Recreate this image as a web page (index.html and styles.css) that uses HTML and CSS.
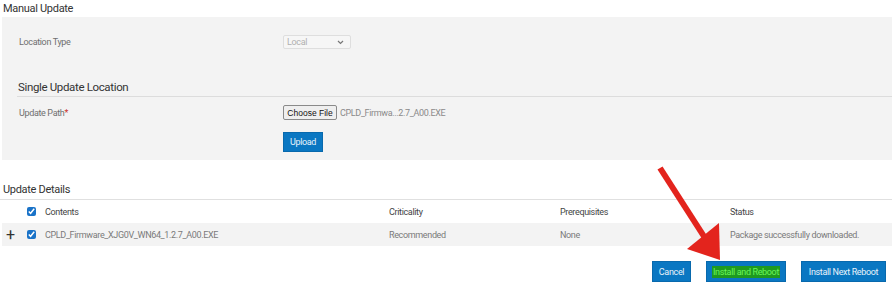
FILE: index.html
```html
<!DOCTYPE html>
<html lang="en">
<head>
    <meta charset="UTF-8">
    <meta name="viewport" content="width=device-width, initial-scale=1.0">
    <title>Firmware Update</title>
    <link rel="stylesheet" href="styles.css">
</head>
<body>
    <p class="page-title">Manual Update</p>

    <section class="panel">
        <div class="form-row">
            <span class="form-label">Location Type</span>
            <div class="fake-select">
                <span>Local</span>
                <svg width="7" height="5" viewBox="0 0 7 5"><path d="M1 1 L3.5 3.5 L6 1" fill="none" stroke="#777" stroke-width="1.2"/></svg>
            </div>
        </div>

        <p class="sub-title">Single Update Location</p>

        <div class="form-row path-row">
            <span class="form-label">Update Path<span class="req">*</span></span>
            <button class="file-btn">Choose File</button>
            <span class="file-name">CPLD_Firmwa...2.7_A00.EXE</span>
        </div>

        <div class="form-row upload-row">
            <span class="form-label"></span>
            <button class="blue-btn upload-btn">Upload</button>
        </div>
    </section>

    <p class="section-title">Update Details</p>

    <div class="grid-row head-row">
        <span></span>
        <span><input type="checkbox" class="chk" checked></span>
        <span>Contents</span>
        <span>Criticality</span>
        <span>Prerequisites</span>
        <span>Status</span>
    </div>
    <div class="grid-row data-row">
        <span class="plus">+</span>
        <span><input type="checkbox" class="chk" checked></span>
        <span>CPLD_Firmware_XJG0V_WN64_1.2.7_A00.EXE</span>
        <span>Recommended</span>
        <span>None</span>
        <span>Package successfully downloaded.</span>
    </div>

    <div class="actions">
        <button class="blue-btn cancel-btn">Cancel</button>
        <button class="blue-btn reboot-btn"><span class="marker">Install and Reboot</span></button>
        <button class="blue-btn next-btn">Install Next Reboot</button>
    </div>

    <!-- red arrow drawn on top of the screenshot -->
    <svg class="arrow" width="895" height="294" viewBox="0 0 895 294">
        <line x1="660" y1="168" x2="705" y2="238" stroke="#e3241d" stroke-width="6"/>
        <polygon points="687,249 719,223 720,260" fill="#e3241d"/>
    </svg>
</body>
</html>
```

FILE: styles.css
```css
*{
    padding: 0;
    margin: 0;
    box-sizing: border-box;
}
body{
    position: relative;
    width: 895px;
    height: 294px;
    overflow: hidden;
    background-color: white;
    font-family: Roboto, "Liberation Sans", Arial, sans-serif;
    font-size: 9px;
    letter-spacing: -0.35px;
    color: #6f6f6f;
}
.page-title{
    padding-left: 3px;
    height: 17px;
    line-height: 17px;
    font-size: 11px;
    letter-spacing: -0.3px;
    color: #333;
}
.panel{
    margin: 0 3px 0 2px;
    padding: 18px 0 8px 15px;
    background-color: #f3f3f3;
}
.form-row{
    display: flex;
    align-items: center;
    height: 14px;
    padding-left: 2px;
}
.form-label{
    width: 264px;
    flex-shrink: 0;
}
.req{
    color: #c9302c;
}
.fake-select{
    width: 68px;
    height: 14px;
    display: flex;
    align-items: center;
    justify-content: space-between;
    padding: 0 6px 0 3px;
    background-color: #f6f6f6;
    border: 1px solid #dedede;
    border-radius: 2px;
    color: #b0b0b0;
}
.sub-title{
    margin-top: 29px;
    height: 19px;
    line-height: 18px;
    padding-left: 1px;
    font-size: 11.5px;
    letter-spacing: -0.35px;
    color: #333;
    border-bottom: 1px solid #dcdcdc;
}
.path-row{
    margin-top: 8px;
    height: 15px;
}
.file-btn{
    width: 54px;
    height: 15px;
    padding: 0;
    font-family: "Liberation Sans", Arial, sans-serif;
    font-size: 8.5px;
    letter-spacing: 0;
    color: #111;
    background-color: #efefef;
    border: 1px solid #8a8a8a;
    border-radius: 2px;
}
.file-name{
    margin-left: 3px;
    color: #8a8a8a;
}
.upload-row{
    margin-top: 12px;
    height: 20px;
}
.blue-btn{
    font-family: Roboto, "Liberation Sans", Arial, sans-serif;
    font-size: 9px;
    letter-spacing: -0.35px;
    color: #e9f3fb;
    background-color: #0a77c2;
    border: 1px solid #0869ad;
    height: 21px;
    white-space: nowrap;
    cursor: pointer;
}
.upload-btn{
    width: 40px;
    height: 20px;
}
.section-title{
    margin-top: 21px;
    padding-left: 3px;
    height: 19px;
    line-height: 18px;
    font-size: 11px;
    letter-spacing: -0.3px;
    color: #333;
    border-bottom: 1px solid #e0e0e0;
    width: 892px;
}
.grid-row{
    display: grid;
    grid-template-columns: 25px 18px 344px 171px 170px 1fr;
    align-items: center;
    height: 23px;
    margin: 0 3px 0 2px;
    white-space: nowrap;
}
.head-row{
    color: #444;
}
.data-row{
    background-color: #f3f3f3;
    color: #7a7a7a;
}
.chk{
    display: block;
    width: 9px;
    height: 9px;
    accent-color: #1a73c8;
}
.plus{
    padding-left: 4px;
    font-size: 16px;
    line-height: 16px;
    color: #333;
}
.actions{
    margin-top: 15px;
    padding-right: 9px;
    display: flex;
    justify-content: flex-end;
    gap: 15px;
}
.cancel-btn{
    width: 39px;
}
.reboot-btn{
    width: 80px;
}
.next-btn{
    width: 85px;
}
.marker{
    background-color: #1f9a1f;
    color: #6cf55a;
    padding: 1px 1px;
}
.arrow{
    position: absolute;
    left: 0;
    top: 0;
    pointer-events: none;
}
```
